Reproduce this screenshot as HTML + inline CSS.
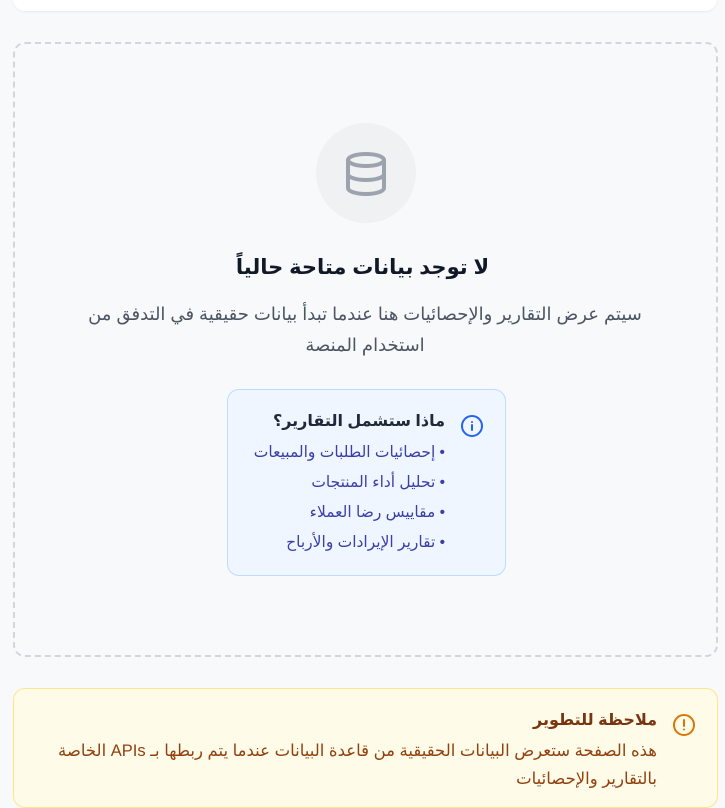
<!DOCTYPE html>
<html dir="rtl"><head><meta charset="utf-8"><style>
*{box-sizing:border-box;margin:0;padding:0}
body{width:725px;height:781px;overflow:hidden;background:#f8f9fa;font-family:"Liberation Sans","DejaVu Sans",sans-serif;position:relative}
.top{position:absolute;left:13px;right:8px;top:-20px;height:31px;background:#fff;border-radius:12px;box-shadow:0 1px 2px rgba(0,0,0,.06)}
.dash{position:absolute;left:13px;top:42px;width:705px;height:615px;border:2px dashed #d4d6da;border-radius:12px}
.circ{position:absolute;left:316px;top:123px;width:100px;height:100px;border-radius:50%;background:#f0f1f3}
.circ svg{position:absolute;left:28px;top:28px}
h2{position:absolute;left:0;width:725px;top:255px;text-align:center;font-size:21px;font-weight:bold;color:#111827}
.p{position:absolute;left:70px;width:590px;top:299px;text-align:center;font-size:18px;line-height:31px;color:#4b5563}
.info{position:absolute;left:227px;top:389px;width:279px;height:187px;background:#eff6ff;border:1px solid #bfdbfe;border-radius:12px}
.info .t{position:absolute;right:60px;top:21px;font-size:16px;font-weight:bold;color:#1f2937;white-space:nowrap}
.info svg{position:absolute;right:21px;top:24px}
.info ul{position:absolute;right:60px;top:48px;list-style:none;color:#3b3fa8;font-size:15.5px;line-height:30px;white-space:nowrap}
.note{position:absolute;left:13px;top:688px;width:705px;height:120px;background:#fefbe8;border:1px solid #fde68a;border-radius:12px}
.note svg{position:absolute;right:21px;top:24px}
.note .t{position:absolute;right:60px;top:21px;font-size:16px;font-weight:bold;color:#78350f;white-space:nowrap}
.note .b{position:absolute;right:60px;top:48px;width:605px;font-size:16.5px;line-height:28px;color:#92400e}
</style></head><body>
<div class="top"></div>
<div class="dash"></div>
<div class="circ"><svg width="44" height="46" viewBox="0 0 22 23" fill="none" stroke="#9ca3af" stroke-width="2" stroke-linecap="round"><ellipse cx="11" cy="4.5" rx="9" ry="3"/><path d="M2 4.5v14c0 1.7 4 3 9 3s9-1.3 9-3v-14"/><path d="M2 11.5c0 1.7 4 3 9 3s9-1.3 9-3"/></svg></div>
<h2>لا توجد بيانات متاحة حالياً</h2>
<div class="p">سيتم عرض التقارير والإحصائيات هنا عندما تبدأ بيانات حقيقية في التدفق من استخدام المنصة</div>
<div class="info">
<svg width="24" height="24" viewBox="0 0 24 24" fill="none" stroke="#2563eb" stroke-width="2" stroke-linecap="round"><circle cx="12" cy="12" r="10"/><path d="M12 11v5M12 8h.01"/></svg>
<div class="t">ماذا ستشمل التقارير؟</div>
<ul><li>• إحصائيات الطلبات والمبيعات</li><li>• تحليل أداء المنتجات</li><li>• مقاييس رضا العملاء</li><li>• تقارير الإيرادات والأرباح</li></ul>
</div>
<div class="note">
<svg width="24" height="24" viewBox="0 0 24 24" fill="none" stroke="#d97706" stroke-width="2" stroke-linecap="round"><circle cx="12" cy="12" r="10"/><path d="M12 7v6M12 16.5h.01"/></svg>
<div class="t">ملاحظة للتطوير</div>
<div class="b">هذه الصفحة ستعرض البيانات الحقيقية من قاعدة البيانات عندما يتم ربطها بـ APIs الخاصة بالتقارير والإحصائيات</div>
</div>
</body></html>
